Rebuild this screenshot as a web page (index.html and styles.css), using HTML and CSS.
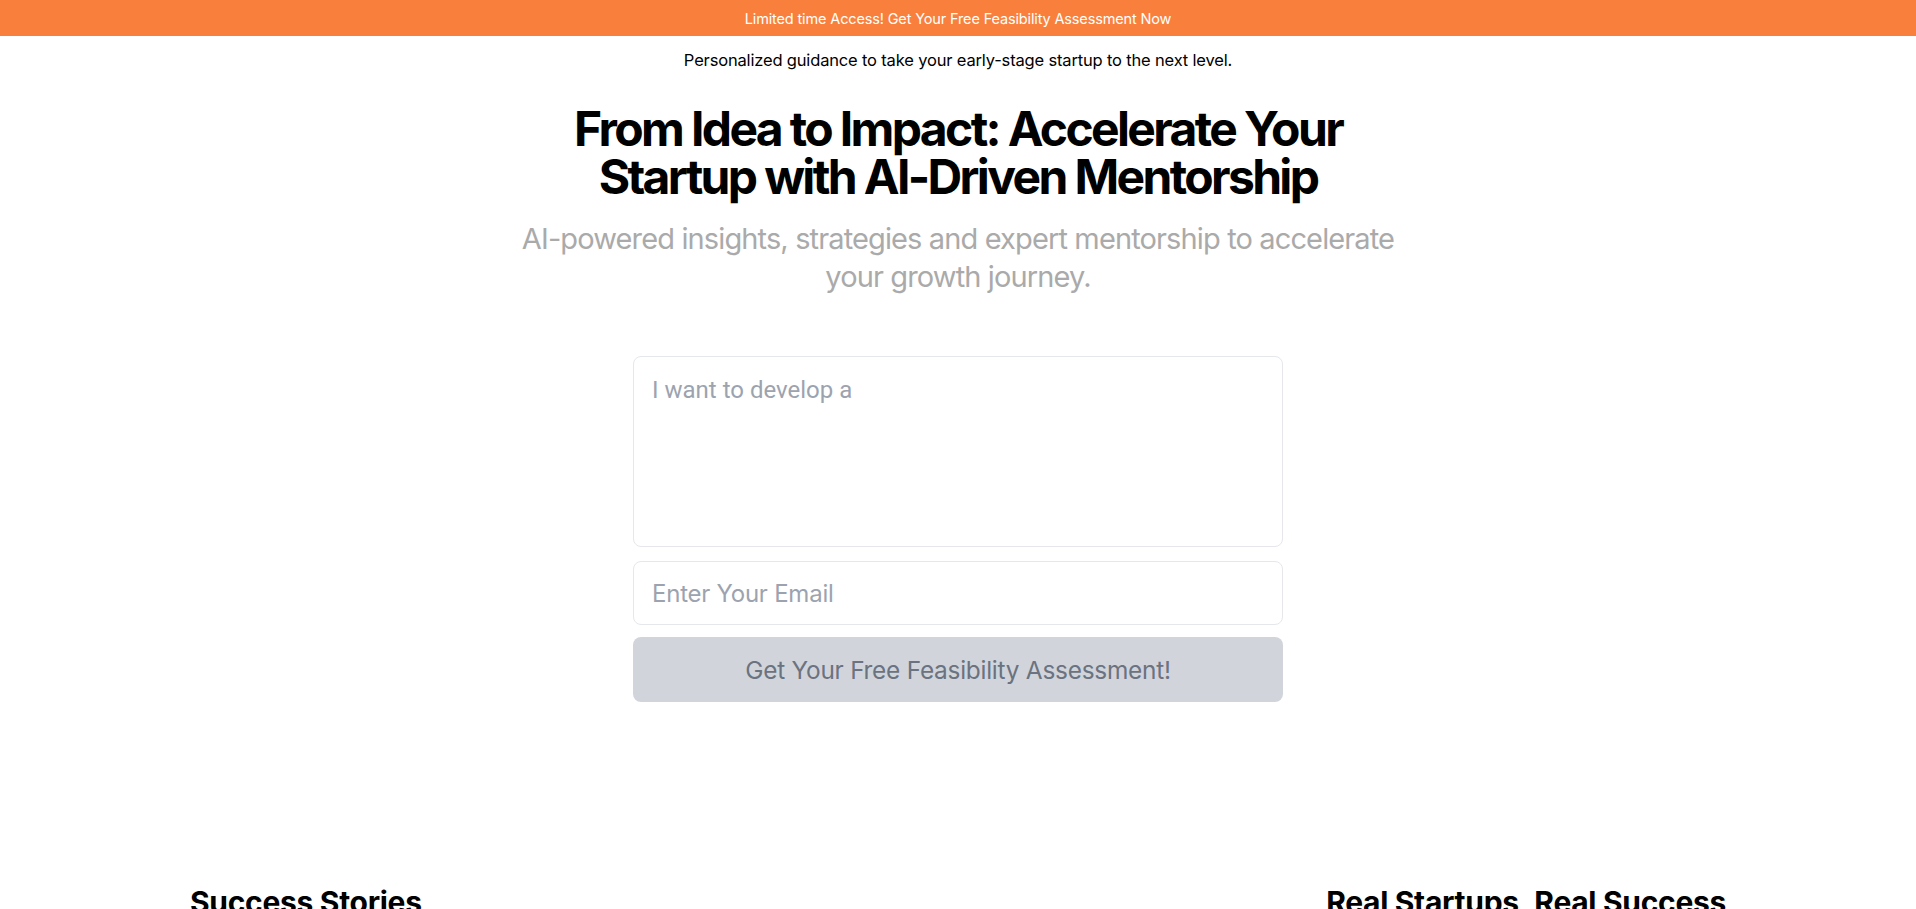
FILE: index.html
```html
<!DOCTYPE html>
<html lang="en">
<head>
<meta charset="utf-8">
<title>From Idea to Impact</title>
<link rel="stylesheet" href="styles.css">
</head>
<body>
<div class="banner">Limited time Access! Get Your Free Feasibility Assessment Now</div>
<main class="hero">
  <p class="tagline">Personalized guidance to take your early-stage startup to the next level.</p>
  <h1 class="title"><span class="title-line">From Idea to Impact: Accelerate Your</span><span class="title-line">Startup with AI-Driven Mentorship</span></h1>
  <p class="lead">AI-powered insights, strategies and expert mentorship to accelerate<br>your growth journey.</p>
  <form class="form">
    <textarea class="field idea" placeholder="I want to develop a"></textarea>
    <input class="field email" type="email" placeholder="Enter Your Email">
    <button class="submit" type="button">Get Your Free Feasibility Assessment!</button>
  </form>
</main>
<section class="stories">
  <h2 class="stories-title">Success Stories</h2>
  <h2 class="stories-title">Real Startups, Real Success</h2>
</section>
</body>
</html>
```

FILE: styles.css
```css
* { box-sizing: border-box; }
html, body { margin: 0; padding: 0; background: #ffffff; }
body { font-family: Inter, "Liberation Sans", sans-serif; color: #000; }

.banner {
  height: 36px;
  background: #f97f3c;
  color: #ffffff;
  font-size: 14.5px;
  letter-spacing: -0.01em;
  display: flex;
  align-items: center;
  justify-content: center;
}

.hero {
  display: flex;
  flex-direction: column;
  align-items: center;
  text-align: center;
}

.tagline {
  margin: 12px 0 0;
  font-size: 16.5px;
  line-height: 24px;
  letter-spacing: -0.01em;
}

.title {
  margin: 33px 0 0;
  font-size: 48px;
  font-weight: 700;
  letter-spacing: -0.055em;
  display: flex;
  flex-direction: column;
  align-items: center;
}

.title-line {
  display: block;
  height: 48px;
  line-height: 48px;
}

.lead {
  margin: 19px 0 0;
  font-size: 29px;
  line-height: 38px;
  color: #aaaaaa;
  letter-spacing: -0.03em;
}

.form {
  margin-top: 60px;
  width: 650px;
  display: flex;
  flex-direction: column;
}

.field {
  width: 100%;
  border: 1px solid #e5e7eb;
  border-radius: 8px;
  font-family: Roboto, "Liberation Sans", sans-serif;
  font-size: 24px;
  color: #111827;
  padding: 0 18px;
  outline: none;
  background: #fff;
}
.field::placeholder { color: #9ca3af; }

.idea {
  height: 191px;
  padding-top: 19px;
  line-height: 28px;
  resize: none;
  display: block;
}

.email {
  margin-top: 14px;
  height: 64px;
  font-family: Inter, "Liberation Sans", sans-serif;
  font-size: 24px;
  letter-spacing: -0.01em;
}

.submit {
  margin-top: 12px;
  height: 65px;
  border: none;
  border-radius: 8px;
  background: #d1d5db;
  color: #6b7280;
  font-family: Inter, "Liberation Sans", sans-serif;
  font-size: 24.4px;
  letter-spacing: -0.01em;
}

.stories {
  width: 1536px;
  margin: 182px auto 0;
  display: flex;
  justify-content: space-between;
  padding-bottom: 200px;
}

.stories-title {
  margin: 0;
  font-size: 30px;
  line-height: 36px;
  font-weight: 700;
  letter-spacing: -0.01em;
}
```
